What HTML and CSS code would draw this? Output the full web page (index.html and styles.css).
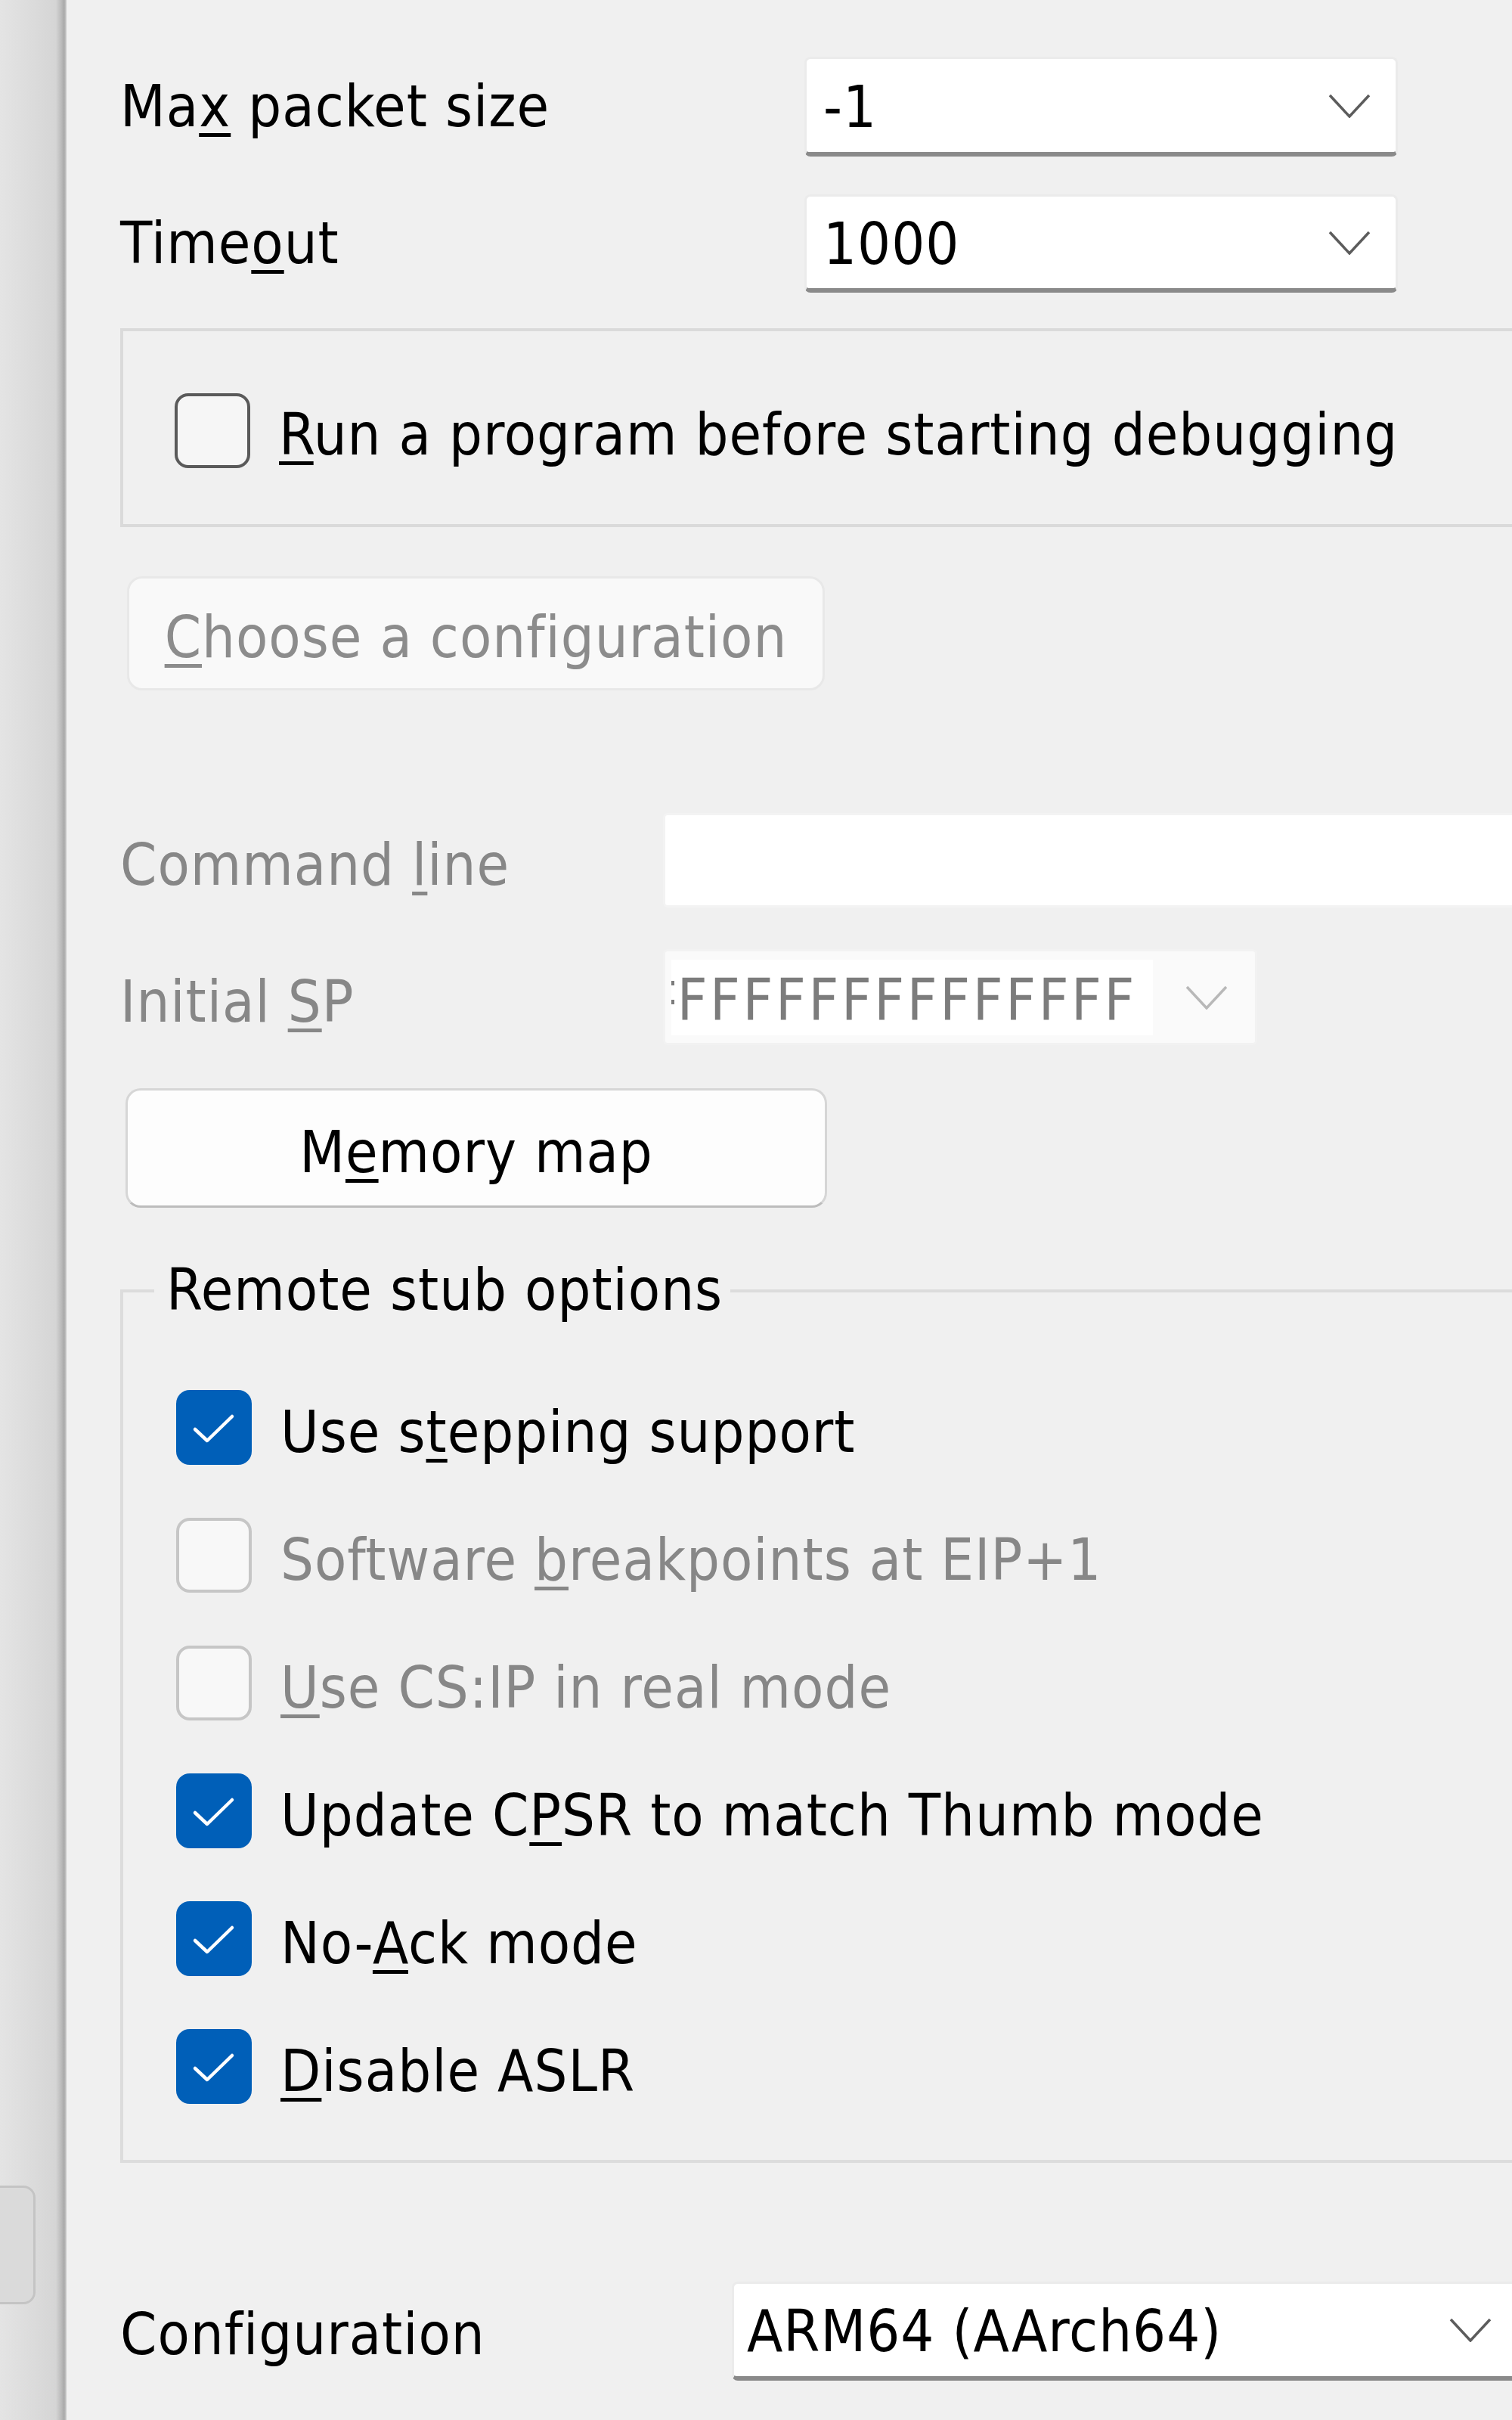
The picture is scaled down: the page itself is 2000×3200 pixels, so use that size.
FILE: index.html
```html
<!DOCTYPE html>
<html>
<head>
<meta charset="utf-8">
<title>Debugger options</title>
<link rel="stylesheet" href="styles.css">
</head>
<body>
<div class="screen">
  <aside class="strip"><div class="strip-btn"></div></aside>
  <main class="panel">
    <div class="row row-1">
      <span class="lbl lbl-a">Ma<u>x</u> packet size</span>
      <div class="combo combo-a">
        <span class="val">-1</span>
        <svg class="chev" viewBox="0 0 56 32"><polyline points="2,2 28,30 54,2"/></svg>
      </div>
    </div>
    <div class="row row-2">
      <span class="lbl lbl-a">Time<u>o</u>ut</span>
      <div class="combo combo-a combo-b">
        <span class="val">1000</span>
        <svg class="chev" viewBox="0 0 56 32"><polyline points="2,2 28,30 54,2"/></svg>
      </div>
    </div>

    <div class="runbox">
      <span class="cb cb-off"></span>
      <span class="cb-text"><u>R</u>un a program before starting debugging</span>
    </div>

    <div class="btn btn-disabled"><span class="btn-text"><u>C</u>hoose a configuration</span></div>

    <div class="row row-cmd">
      <span class="lbl lbl-b dim">Command <u>l</u>ine</span>
      <div class="textbox"></div>
    </div>
    <div class="row row-sp">
      <span class="lbl lbl-b dim">Initial <u>S</u>P</span>
      <div class="combo-sp">
        <div class="sp-field"><span class="sp-sliver"></span><span class="sp-val">FFFFFFFFFFFFFF</span></div>
        <svg class="chev chev-dim" viewBox="0 0 56 32"><polyline points="2,2 28,30 54,2"/></svg>
      </div>
    </div>

    <div class="btn btn-normal"><span class="btn-text">M<u>e</u>mory map</span></div>

    <section class="group">
      <div class="group-title"><span>Remote stub options</span></div>
      <div class="cb-rows">
        <div class="cbrow">
          <span class="cb cb-on"><svg class="tick" viewBox="0 0 100 99"><polyline points="25,52 41,67 74,35"/></svg></span>
          <span class="cb-text">Use s<u>t</u>epping support</span>
        </div>
        <div class="cbrow">
          <span class="cb cb-dis"></span>
          <span class="cb-text dim">Software <u>b</u>reakpoints at EIP+1</span>
        </div>
        <div class="cbrow">
          <span class="cb cb-dis"></span>
          <span class="cb-text dim"><u>U</u>se CS:IP in real mode</span>
        </div>
        <div class="cbrow">
          <span class="cb cb-on"><svg class="tick" viewBox="0 0 100 99"><polyline points="25,52 41,67 74,35"/></svg></span>
          <span class="cb-text">Update C<u>P</u>SR to match Thumb mode</span>
        </div>
        <div class="cbrow">
          <span class="cb cb-on"><svg class="tick" viewBox="0 0 100 99"><polyline points="25,52 41,67 74,35"/></svg></span>
          <span class="cb-text">No-<u>A</u>ck mode</span>
        </div>
        <div class="cbrow">
          <span class="cb cb-on"><svg class="tick" viewBox="0 0 100 99"><polyline points="25,52 41,67 74,35"/></svg></span>
          <span class="cb-text"><u>D</u>isable ASLR</span>
        </div>
      </div>
    </section>

    <div class="row row-cfg">
      <span class="lbl lbl-c">Configuration</span>
      <div class="combo combo-cfg">
        <span class="val">ARM64 (AArch64)</span>
        <svg class="chev" viewBox="0 0 56 32"><polyline points="2,2 28,30 54,2"/></svg>
      </div>
    </div>
  </main>
</div>
</body>
</html>
```

FILE: styles.css
```css
html, body {
  margin: 0;
  padding: 0;
}

body {
  width: 2000px;
  height: 3200px;
  overflow: hidden;
  background: #f0f0f0;
  font-family: "DejaVu Sans Condensed", "DejaVu Sans", sans-serif;
  font-stretch: condensed;
  font-size: 77px;
  letter-spacing: 1px;
  color: #000;
}

u {
  text-decoration-thickness: 5px;
  text-underline-offset: 9px;
  text-decoration-skip-ink: none;
}

.screen {
  display: flex;
  height: 3200px;
}

/* left neighbouring pane */
.strip {
  flex: none;
  width: 88px;
  box-sizing: border-box;
  padding-top: 2890px;
  overflow: hidden;
  background: linear-gradient(to right, #e4e4e4 0, #d5d5d5 74px, #bfbfbf 80px, #a9a9a9 85px, #cfcfcf 88px);
}

.strip-btn {
  margin-left: -40px;
  width: 87px;
  height: 157px;
  box-sizing: border-box;
  border: 3px solid #c4c4c4;
  border-radius: 16px;
  background: #dadada;
}

.panel {
  flex: 1;
  min-width: 0;
  padding-left: 71px;
}

.row {
  display: flex;
  align-items: center;
}

.lbl {
  flex: none;
  white-space: nowrap;
  line-height: 90px;
}

.dim {
  color: #878787;
}

.row-1 { margin-top: 75px; height: 132px; }
.row-2 { margin-top: 50px; height: 130px; }
.lbl-a { width: 905px; }

.combo {
  flex: none;
  box-sizing: border-box;
  display: flex;
  align-items: center;
  justify-content: space-between;
  background: #fff;
  border: 3px solid #ebebeb;
  border-bottom: 6px solid #8a8a8a;
  border-radius: 8px;
  padding: 0 33px 0 22px;
}

.combo-a { width: 785px; height: 132px; }
.combo-b { height: 130px; }

.val {
  white-space: nowrap;
  line-height: 90px;
  padding-top: 4px;
}

.chev {
  flex: none;
  width: 56px;
  height: 32px;
  fill: none;
  stroke: #5c5c5c;
  stroke-width: 3.5;
}

.chev-dim {
  stroke: #b8b8b8;
}

/* Run a program group */
.runbox {
  margin-top: 47px;
  height: 263px;
  box-sizing: border-box;
  border: 4px solid #dadada;
  border-right: none;
  display: flex;
  align-items: center;
  padding: 7px 0 0 68px;
}

.cb {
  flex: none;
  box-sizing: border-box;
  width: 100px;
  height: 99px;
  border-radius: 18px;
  margin-right: 38px;
}

.cb-off {
  border: 4px solid #5a5a5a;
  background: #f6f6f6;
}

.cb-dis {
  border: 4px solid #c6c6c6;
  background: #f8f8f8;
}

.cb-on {
  background: #005fb8;
  display: flex;
}

.tick {
  width: 100px;
  height: 99px;
  fill: none;
  stroke: #ffffff;
  stroke-width: 4.5;
  stroke-linecap: round;
  stroke-linejoin: round;
}

.cb-text {
  white-space: nowrap;
  line-height: 90px;
  padding-top: 12px;
}

/* buttons */
.btn {
  box-sizing: border-box;
  display: flex;
  align-items: center;
  justify-content: center;
  border-radius: 20px;
}

.btn-text {
  white-space: nowrap;
  line-height: 90px;
  padding-top: 11px;
}

.btn-disabled {
  margin: 65px 0 0 9px;
  width: 923px;
  height: 151px;
  border: 3px solid #e8e8e8;
  background: #f9f9f9;
  color: #8c8c8c;
}

.btn-normal {
  margin: 57px 0 0 7px;
  width: 928px;
  height: 158px;
  border: 3px solid #d6d6d6;
  border-bottom-color: #bcbcbc;
  background: #fdfdfd;
}

/* command line / initial sp */
.lbl-b {
  width: 718px;
  padding-top: 12px;
}

.row-cmd { margin-top: 162px; height: 125px; }
.row-sp { margin-top: 55px; height: 127px; }

.textbox {
  flex: none;
  box-sizing: border-box;
  width: 1300px;
  height: 125px;
  background: #fff;
  border: 3px solid #f3f3f3;
  border-radius: 6px;
}

.combo-sp {
  flex: none;
  box-sizing: border-box;
  width: 786px;
  height: 127px;
  display: flex;
  align-items: center;
  padding-left: 8px;
  background: #fafafa;
  border: 3px solid #f2f2f2;
  border-radius: 6px;
}

.sp-field {
  flex: none;
  box-sizing: border-box;
  width: 637px;
  height: 100px;
  background: #fff;
  display: flex;
  align-items: center;
  justify-content: space-between;
  padding-right: 21px;
}

.sp-sliver {
  flex: none;
  width: 4px;
  height: 56px;
  margin-top: 12px;
  background:
    linear-gradient(#7c7c7c, #7c7c7c) 0 0 / 4px 6px no-repeat,
    linear-gradient(#7c7c7c, #7c7c7c) 0 25px / 4px 6px no-repeat;
}

.sp-val {
  flex: none;
  white-space: nowrap;
  line-height: 90px;
  padding-top: 8px;
  color: #7c7c7c;
  letter-spacing: 3.6px;
}

.combo-sp .chev {
  margin-left: 43px;
}

/* Remote stub options group */
.group {
  margin-top: 108px;
  border: 4px solid #dcdcdc;
  border-right: none;
  padding-bottom: 39px;
}

.group-title {
  margin-top: -48px;
  height: 90px;
  line-height: 90px;
  padding-left: 41px;
}

.group-title span {
  display: inline-block;
  background: #f0f0f0;
  padding: 0 10px 0 16px;
  white-space: nowrap;
}

.cb-rows {
  padding-top: 52px;
}

.cbrow {
  height: 169px;
  display: flex;
  align-items: center;
  padding-left: 70px;
}

/* configuration */
.row-cfg { margin-top: 157px; height: 131px; }

.lbl-c {
  width: 809px;
  padding-top: 8px;
}

.combo-cfg {
  width: 1041px;
  height: 131px;
  padding-left: 17px;
}
```
